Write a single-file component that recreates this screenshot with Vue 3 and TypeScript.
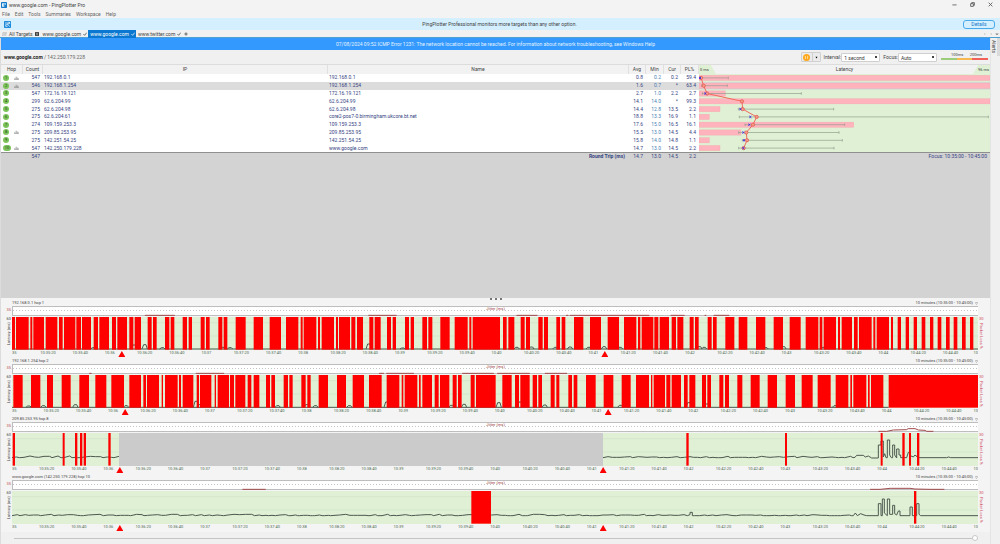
<script setup lang="ts">
import { ref } from 'vue'

interface Hop {
  n: number
  graphed: boolean
  count: number
  ip: string
  name: string
  avg: string
  min: string
  cur: string
  loss: string
  bar: number
  range: [number, number] | null
  avgX: number
  curX: number | null
}

type Span = [number, number]

interface Graph {
  id: string
  title: string
  shift: number
  markers: number[]
  loss: Span[]
  gap: Span | null
  latency: string
  jitter: string
}

const menus = ['File', 'Edit', 'Tools', 'Summaries', 'Workspace', 'Help']

const hops: Hop[] = [
  { n: 1, graphed: true, count: 547, ip: '192.168.0.1', name: '192.168.0.1', avg: '0.8', min: '0.2', cur: '0.2', loss: '59.4', bar: 873, range: [4, 88], avgX: 6, curX: 3 },
  { n: 2, graphed: true, count: 546, ip: '192.168.1.254', name: '192.168.1.254', avg: '1.6', min: '0.7', cur: '*', loss: '63.4', bar: 873, range: [8, 85], avgX: 14, curX: null },
  { n: 3, graphed: false, count: 547, ip: '172.16.19.121', name: '172.16.19.121', avg: '2.7', min: '1.0', cur: '2.2', loss: '2.7', bar: 79, range: [10, 307], avgX: 24, curX: 19 },
  { n: 4, graphed: false, count: 299, ip: '62.6.204.99', name: '62.6.204.99', avg: '14.1', min: '14.0', cur: '*', loss: '99.3', bar: 873, range: null, avgX: 129, curX: null },
  { n: 5, graphed: false, count: 275, ip: '62.6.204.98', name: '62.6.204.98', avg: '14.4', min: '12.8', cur: '13.5', loss: '2.2', bar: 63, range: [118, 404], avgX: 131, curX: 124 },
  { n: 6, graphed: false, count: 275, ip: '62.6.204.61', name: 'core2-pos7-0.birmingham.ukcore.bt.net', avg: '18.8', min: '13.3', cur: '16.9', loss: '1.1', bar: 31, range: [121, 868], avgX: 173, curX: 154 },
  { n: 7, graphed: false, count: 274, ip: '109.159.253.3', name: '109.159.253.3', avg: '17.6', min: '15.0', cur: '16.5', loss: '16.1', bar: 464, range: [138, 437], avgX: 162, curX: 151 },
  { n: 8, graphed: true, count: 275, ip: '209.85.253.95', name: '209.85.253.95', avg: '15.5', min: '13.0', cur: '14.5', loss: '4.4', bar: 126, range: [119, 420], avgX: 142, curX: 133 },
  { n: 9, graphed: false, count: 275, ip: '142.251.54.25', name: '142.251.54.25', avg: '15.8', min: '14.0', cur: '14.8', loss: '1.1', bar: 31, range: [130, 430], avgX: 144, curX: 135 },
  { n: 10, graphed: true, count: 547, ip: '142.250.179.228', name: 'www.google.com', avg: '14.7', min: '13.0', cur: '14.5', loss: '2.2', bar: 63, range: [119, 405], avgX: 134, curX: 133 },
]

const rowY = (i: number) => i * 24 + 12
const avgLine = hops.map((h, i) => `${h.avgX},${rowY(i)}`).join(' ')

const X0 = 36
const X1 = 2934

/* Small repeatable ripple for the latency traces */
function ripple(from: number, to: number, base: number, size: number, seed: number): string {
  let s = seed
  let d = `M${from} ${base}`
  let x = from
  while (x < to) {
    s = (s * 1103515245 + 12345) % 2147483648
    const r = s / 2147483648
    x = Math.min(to, x + 6 + Math.round(r * 12))
    d += ` L${x} ${base - Math.round(r * r * size)}`
  }
  return d
}

function bumps(list: Span[], base: number): string {
  return list.map(([x, h]) => `M${x - 8} ${base} L${x - 3} ${base - h} H${x + 4} L${x + 8} ${base}`).join(' ')
}

const loss1: Span[] = [
  [36, 45], [48, 86], [91, 97], [100, 132], [137, 172], [177, 188], [192, 226], [229, 243], [246, 273], [281, 294],
  [298, 327], [336, 348], [352, 381], [388, 400], [404, 423], [443, 455], [459, 470], [495, 508], [512, 523], [548, 561],
  [566, 576], [602, 614], [618, 629], [655, 667], [671, 682], [707, 737], [761, 789], [809, 843], [858, 895], [902, 908],
  [911, 949], [954, 960], [965, 1002], [1008, 1014], [1017, 1050], [1054, 1066], [1071, 1089], [1108, 1120], [1124, 1142],
  [1161, 1173], [1178, 1188], [1215, 1227], [1232, 1242], [1267, 1281], [1285, 1297], [1321, 1349], [1364, 1403],
  [1408, 1414], [1418, 1500], [1509, 1520], [1525, 1543], [1562, 1574], [1578, 1590], [1615, 1628], [1632, 1644],
  [1669, 1680], [1685, 1696], [1722, 1750], [1770, 1803], [1823, 1857], [1872, 1909], [1914, 1921], [1925, 1960],
  [1963, 1975], [1979, 2007], [2015, 2028], [2032, 2050], [2069, 2081], [2085, 2096], [2123, 2135], [2139, 2150],
  [2176, 2203], [2216, 2242], [2268, 2296], [2321, 2349], [2369, 2402], [2417, 2455], [2459, 2467], [2471, 2508],
  [2514, 2520], [2525, 2556], [2562, 2573], [2577, 2615], [2620, 2626], [2630, 2667], [2673, 2679], [2693, 2703],
  [2717, 2727], [2741, 2751], [2765, 2776], [2790, 2800], [2813, 2824], [2838, 2849], [2861, 2872], [2886, 2897], [2910, 2920],
]

const loss2: Span[] = [
  [40, 68], [93, 121], [141, 159], [185, 212], [238, 267], [286, 319], [334, 372], [388, 423], [430, 438], [441, 477],
  [485, 489], [495, 533], [537, 543], [548, 580], [590, 597], [600, 634], [644, 648], [653, 687], [690, 702], [706, 736],
  [743, 754], [761, 778], [798, 810], [814, 825], [851, 864], [868, 878], [904, 917], [922, 932], [956, 984], [1011, 1038],
  [1058, 1092], [1107, 1145], [1160, 1198], [1205, 1210], [1214, 1252], [1257, 1262], [1267, 1296], [1304, 1316],
  [1320, 1348], [1358, 1370], [1374, 1385], [1412, 1424], [1428, 1487], [1507, 1535], [1545, 1557], [1561, 1589],
  [1598, 1611], [1615, 1626], [1652, 1664], [1669, 1678], [1705, 1716], [1721, 1732], [1758, 1787], [1811, 1840],
  [1865, 1892], [1908, 1947], [1953, 1957], [1961, 1995], [1999, 2011], [2015, 2043], [2052, 2063], [2068, 2086],
  [2106, 2118], [2122, 2133], [2158, 2170], [2175, 2187], [2212, 2227], [2252, 2279], [2303, 2331], [2357, 2385],
  [2405, 2438], [2453, 2492], [2507, 2545], [2551, 2556], [2560, 2599], [2604, 2609], [2613, 2650], [2666, 2934],
]

const flat = (segs: Span[]) => segs.map(([a, b]) => `M${a} 25 H${b}`).join(' ')

const graphs: Graph[] = [
  {
    id: 'hop1',
    title: '192.168.0.1 hop 1',
    shift: -12,
    markers: [364, 1813],
    loss: loss1,
    gap: null,
    latency: 'M36 96 H2934 ' + bumps([[280, 4], [402, 12], [434, 13], [487, 4], [668, 5], [690, 4], [1106, 15], [1208, 3], [1550, 5], [1594, 6], [1666, 5], [1710, 6], [1766, 5], [1812, 7], [1860, 5], [2098, 7], [2112, 5], [2297, 4], [2350, 7], [2468, 5]], 96),
    jitter: flat([[432, 522], [1103, 1188], [1548, 1611], [1697, 1704], [1708, 1947], [2011, 2053], [2113, 2118], [2140, 2187]]),
  },
  {
    id: 'hop2',
    title: '192.168.1.254 hop 2',
    shift: -2,
    markers: [374, 1823],
    loss: loss2,
    gap: null,
    latency: 'M36 97 H2666 ' + bumps([[86, 4], [130, 5], [226, 8], [378, 5], [588, 18], [600, 8], [833, 5], [920, 8], [946, 5], [1048, 5], [1160, 16], [1354, 6], [1392, 9], [1496, 14], [1560, 16], [1634, 7], [1861, 6], [2066, 14], [2120, 10], [2505, 5]], 97),
    jitter: flat([[265, 272], [585, 670], [1135, 1150], [1157, 1240], [1385, 1480], [1490, 1588], [1633, 1700]]),
  },
  {
    id: 'hop8',
    title: '209.85.253.95 hop 8',
    shift: -16,
    markers: [358, 1808],
    loss: [[38, 45], [188, 194], [225, 232], [240, 247], [251, 258], [325, 332], [2059, 2066], [2355, 2361], [2642, 2648], [2707, 2714], [2727, 2733], [2751, 2758]],
    gap: [357, 1809],
    latency:
      ripple(36, 357, 74, 5, 7) + ' ' + ripple(1809, 2565, 74, 4, 21) +
      ' L2570 67 H2590 L2596 72 L2605 69 L2615 75 H2635 V36 H2643 V24 H2650 V72 L2654 62 L2658 74 H2662 V21 H2669 V66 L2674 74 H2678 V36 H2684 V66 L2690 75 V48 H2697 V66 H2702 V74 H2720 L2725 58 H2731 V68 L2740 72 L2745 66 L2752 72 V66 L2758 74 H2840 L2846 72 L2852 74 H2934',
    jitter: 'M2635 25 H2660 L2680 21 L2720 20 L2724 17 H2745 L2755 21 L2775 22 L2780 25 H2800',
  },
  {
    id: 'hop10',
    title: 'www.google.com (142.250.179.228) hop 10',
    shift: -16,
    markers: [358, 1808],
    loss: [[1414, 1473], [2742, 2749]],
    gap: null,
    latency:
      ripple(36, 2070, 74, 4, 99) + ' V64 H2077 V74 ' + ripple(2077, 2560, 74, 3, 45).replace('M', 'L') +
      ' L2566 66 L2572 74 L2582 68 L2592 72 L2600 74 H2635 V38 H2643 V74 H2647 V24 H2653 V66 L2662 74 V24 H2669 V70 H2678 V43 H2684 V68 L2690 72 L2695 60 H2700 V74 H2730 V48 H2737 V74 H2750 V38 H2757 V70 L2762 74 H2934',
    jitter: 'M725 25 H795 M2610 25 H2640 L2670 22 H2730 L2745 24 L2790 25 H2833',
  },
]

const tickTexts: string[] = []
for (let m = 35; m < 45; m++) {
  tickTexts.push(m === 35 ? '35' : `10:${m}`, `10:${m}:20`, `10:${m}:40`)
}

const pct = (x: number) => `${((x - X0) / (X1 - X0)) * 100}%`
const tickX = (i: number, shift: number) => (i === 0 ? '0%' : pct(X0 + shift + i * 96.7))

const interval = ref('1 second')
const focus = ref('Auto')
const position = ref(100)
</script>

<template>
  <div class="window">
    <header class="titlebar">
      <svg class="app-icon" viewBox="0 0 18 18" aria-hidden="true">
        <rect width="18" height="18" rx="2" fill="#1579c9" />
        <path d="M3 4h7v10H3z" fill="#fff" />
        <path d="M10 3h5v6h-5z" fill="#8ed0f5" />
        <path d="M5 9h8" stroke="#1579c9" stroke-width="2" />
      </svg>
      <span class="caption">www.google.com - PingPlotter Pro</span>
      <button class="win" aria-label="Minimize"><svg viewBox="0 0 12 12"><path d="M1 7h10" /></svg></button>
      <button class="win" aria-label="Restore"><svg viewBox="0 0 12 12"><path d="M1.500 4h6.500v6.500h-6.500zM4 4V1.500h6.500V8H8" /></svg></button>
      <button class="win" aria-label="Close"><svg viewBox="0 0 12 12"><path d="M1.500 1.500l9 9M10.500 1.500l-9 9" /></svg></button>
    </header>

    <nav class="menubar">
      <button v-for="m in menus" :key="m">{{ m }}</button>
    </nav>

    <section class="promo">
      <svg class="promo-icon" viewBox="0 0 21 21" aria-hidden="true">
        <rect width="21" height="21" rx="2" fill="#1c8ad8" />
        <path d="M3 6h9v5H5v5h6M12 4h5v5M17 4l-4 6M13 12l4 5" fill="none" stroke="#fff" stroke-width="2" />
      </svg>
      <span class="promo-text">PingPlotter Professional monitors more targets than any other option.</span>
      <button class="details">Details</button>
    </section>

    <nav class="tabs">
      <button class="tab all">
        <svg viewBox="0 0 15 12"><path d="M3 1h11l-3 10H1zM4 4h8M3 7h8" fill="none" stroke="#aaa" stroke-width="1.500" /></svg>
        All Targets
        <svg class="mark" viewBox="0 0 12 12"><path d="M0 1h12v10H0z" fill="#444" /><path d="M4 4l4 4M8 4l-4 4" stroke="#fff" stroke-width="1.500" /></svg>
      </button>
      <button class="tab">www.google.com <svg class="mark" viewBox="0 0 12 12"><path d="M1 6l4 4 6-8" /></svg></button>
      <button class="tab active">www.google.com <svg class="mark" viewBox="0 0 12 12"><path d="M1 6l4 4 6-8" /></svg></button>
      <button class="tab">www.twitter.com <svg class="mark" viewBox="0 0 12 12"><path d="M1 6l4 4 6-8" /></svg></button>
      <button class="tab add" aria-label="New tab"><svg class="mark" viewBox="0 0 12 12"><path d="M6 1v10M1 6h10" /></svg></button>
      <span class="tab-nav">
        <button aria-label="Previous tab"><svg viewBox="0 0 12 12"><path d="M7 3L4 6l3 3" /></svg></button>
        <button aria-label="Next tab"><svg viewBox="0 0 12 12"><path d="M5 3l3 3-3 3" /></svg></button>
        <button aria-label="Tab list"><svg viewBox="0 0 12 12"><path d="M2 5h8L6 9z" fill="#777" /></svg></button>
      </span>
    </nav>

    <div class="body">
      <main class="main">
        <div class="alert">07/08/2024 09:52 ICMP Error 1231: The network location cannot be reached. For information about network troubleshooting, see Windows Help</div>

        <div class="target">
          <p class="target-name"><b>www.google.com</b> / 142.250.179.228</p>
          <button class="pause" aria-label="Pause">
            <span class="pause-face"><svg viewBox="0 0 20 20"><circle cx="10" cy="10" r="10" fill="#ffa81f" /><path d="M7 6v8M13 6v8" stroke="#ffd88c" stroke-width="3" /></svg></span>
            <span class="pause-more"><svg viewBox="0 0 12 12"><path d="M2 3h8L6 10z" /></svg></span>
          </button>
          <label class="field">Interval:
            <select v-model="interval"><option>1 second</option><option>2.5 seconds</option></select>
          </label>
          <label class="field">Focus:
            <select v-model="focus"><option>Auto</option><option>10 minutes</option></select>
          </label>
          <div class="scale">
            <div class="scale-text"><span>100ms</span><span>200ms</span></div>
            <div class="scale-bar"><i class="good"></i><i class="warn"></i><i class="bad"></i></div>
          </div>
        </div>

        <div class="trace">
          <table class="hops">
            <thead>
              <tr><th>Hop</th><th>Count</th><th>IP</th><th>Name</th><th>Avg</th><th>Min</th><th>Cur</th><th>PL%</th></tr>
            </thead>
            <tbody>
              <tr v-for="h in hops" :key="h.n" :class="{ selected: h.n === 2 }">
                <td class="hop">
                  <span class="badge" :class="{ wide: h.n === 10 }">{{ h.n }}</span>
                  <svg v-if="h.graphed" viewBox="0 0 14 12"><path d="M2 10V6M6 10V2M9 10V4M12 10V6M0 11h14" /></svg>
                </td>
                <td class="num">{{ h.count }}</td>
                <td class="addr">{{ h.ip }}</td>
                <td class="addr">{{ h.name }}</td>
                <td class="num">{{ h.avg }}</td>
                <td class="num min">{{ h.min }}</td>
                <td class="num">{{ h.cur }}</td>
                <td class="num">{{ h.loss }}</td>
              </tr>
            </tbody>
            <tfoot>
              <tr>
                <td></td><td class="num">547</td><td></td><td class="round">Round Trip (ms)</td>
                <td class="num">14.7</td><td class="num">13.0</td><td class="num">14.5</td><td class="num">2.2</td>
              </tr>
            </tfoot>
          </table>
          <div class="latency">
            <div class="latency-head"><span class="lo">0 ms</span><span>Latency</span><span class="hi">96 ms</span></div>
            <svg class="latency-plot" viewBox="0 0 873 240" preserveAspectRatio="none" role="img" aria-label="Latency by hop">
              <rect width="873" height="240" fill="#dff0d4" />
              <rect y="24" width="873" height="24" fill="#d6d6d6" />
              <rect v-for="(h, i) in hops" :key="'b' + h.n" x="0" :y="rowY(i) - 8" :width="h.bar" height="16" fill="#ffb3bd" stroke="#f5a0aa" />
              <template v-for="(h, i) in hops" :key="'w' + h.n">
                <path v-if="h.range" :d="`M${h.range[0]} ${rowY(i)}H${h.range[1]}M${h.range[0]} ${rowY(i) - 4}v8M${h.range[1]} ${rowY(i) - 4}v8`" stroke="#8d9a8b" stroke-width="2" fill="none" />
              </template>
              <polyline :points="avgLine" fill="none" stroke="#f06a5a" stroke-width="3" />
              <template v-for="(h, i) in hops" :key="'p' + h.n">
                <circle :cx="h.avgX" :cy="rowY(i)" r="5" fill="#f59a8e" stroke="#e0503f" stroke-width="2" />
                <path v-if="h.curX !== null" :d="`M${h.curX - 3} ${rowY(i) - 3}l6 6m0 -6l-6 6`" stroke="#3a2ee6" stroke-width="3" />
              </template>
            </svg>
            <div class="latency-foot">Focus: 10:35:00 - 10:45:00</div>
          </div>
        </div>

        <div class="empty"></div>
        <div class="splitter"><i></i><i></i><i></i></div>

        <div class="graphs">
          <section v-for="g in graphs" :key="g.id" class="graph">
            <div class="graph-title">
              <span>{{ g.title }}</span>
              <span>10 minutes (10:35:00 - 10:45:00)<svg viewBox="0 0 12 12"><path d="M1 2h10M2 5l4 5 4-5" /></svg></span>
            </div>
            <span class="jitter-max">35</span>
            <div class="jitter">
              <span class="jitter-label">Jitter (ms)</span>
              <svg viewBox="36 0 2898 27" preserveAspectRatio="none"><path :d="g.jitter" fill="none" stroke="#a04a4a" stroke-width="3" /></svg>
            </div>
            <div class="axis left"><span>60</span><span class="turned">Latency (ms)</span></div>
            <svg class="plot" viewBox="36 0 2898 99" preserveAspectRatio="none" role="img" :aria-label="g.title">
              <rect x="36" width="2898" height="99" fill="#dff0d4" />
              <path d="M36 17H2934M36 57H2934" stroke="#d0e2c8" stroke-width="2" />
              <rect v-if="g.gap" :x="g.gap[0]" :width="g.gap[1] - g.gap[0]" height="99" fill="#cbcbcb" />
              <path :d="g.latency" fill="none" stroke="#4c5850" stroke-width="3" />
              <rect v-for="s in g.loss" :key="s[0]" :x="s[0]" :width="s[1] - s[0]" height="98" fill="#ff0000" />
            </svg>
            <div class="axis right"><span>30</span><span class="turned">Packet Loss %</span></div>
            <div class="ticks">
              <span v-for="(t, i) in tickTexts" :key="t" :style="{ left: tickX(i, g.shift) }">{{ t }}</span>
              <span class="last">10</span>
              <i v-for="m in g.markers" :key="m" :style="{ left: pct(m) }"></i>
            </div>
          </section>
        </div>

        <div class="timeline"><input v-model="position" type="range" min="0" max="100" aria-label="Timeline position" /></div>
      </main>
      <aside class="side"><button>Alerts</button></aside>
    </div>
  </div>
</template>

<style>
body {
  margin: 0;
  background: #f0f0f0;
}
</style>

<style scoped>
.window {
  display: flex;
  flex-direction: column;
  min-height: 100vh;
  font: 5px/8px Roboto, "Open Sans", "Liberation Sans", sans-serif;
  color: #444;
  background: #f0f0f0;
}
.window * {
  box-sizing: border-box;
}
button,
select {
  font: inherit;
  color: inherit;
  background: none;
  border: 0;
  padding: 0;
  margin: 0;
}
svg {
  display: block;
}
.titlebar {
  display: flex;
  align-items: center;
  height: 9px;
  gap: 3px;
  padding: 0 2px 0 1px;
  background: #f3f3f3;
}
.app-icon {
  width: 6px;
  height: 6px;
}
.caption {
  flex: 1;
  margin-left: -1px;
}
.win {
  width: 15px;
}
.win svg {
  width: 5px;
  height: 5px;
  margin: auto;
  fill: none;
  stroke: #555;
  stroke-width: 2;
}
.menubar {
  display: flex;
  gap: 5px;
  height: 9px;
  padding: 0 2px;
  align-items: center;
  background: #f3f3f3;
  color: #666;
}
.promo {
  display: flex;
  align-items: center;
  height: 12px;
  padding: 0 5px 0 4px;
  background: #d4efff;
}
.promo-icon {
  width: 7px;
  height: 7px;
}
.promo-text {
  flex: 1;
  text-align: center;
  padding-left: 25px;
}
.details {
  width: 32px;
  height: 9px;
  line-height: 7px;
  border: 1px solid #4aa9e8;
  border-radius: 3px;
  color: #1476c8;
}
.tabs {
  display: flex;
  height: 8px;
  border-bottom: 1px solid #4f9fd2;
  background: #f1f1f1;
}
.tab {
  display: flex;
  align-items: center;
  gap: 2px;
  padding: 0 1px 0 2px;
  height: 8px;
  line-height: 8px;
}
.tab.all {
  padding-right: 2px;
}
.tab svg {
  width: 5px;
  height: 4px;
}
.tab .mark {
  width: 4px;
  fill: none;
  stroke: #333;
  stroke-width: 2;
}
.tab.active {
  background: #0a78d0;
  color: #fff;
}
.tab.active .mark {
  stroke: #fff;
}
.tab-nav {
  display: flex;
  margin-left: auto;
  gap: 2px;
  padding-right: 1px;
}
.tab-nav svg {
  width: 4px;
  height: 4px;
  fill: none;
  stroke: #777;
  stroke-width: 1;
}
.body {
  flex: 1;
  display: flex;
}
.main {
  flex: 1;
  min-width: 0;
  display: flex;
  flex-direction: column;
  border-left: 1px solid #dcdcdc;
}
.side {
  width: 10px;
  background: #f0f0f0;
  border-left: 1px solid #e4e4e4;
}
.side button {
  writing-mode: vertical-rl;
  width: 9px;
  height: 18px;
  border-right: 3px solid #dadada;
  line-height: 6px;
}
.alert {
  height: 12px;
  line-height: 12px;
  text-align: center;
  background: #3399ff;
  color: #e4f2ff;
}
.target {
  display: flex;
  align-items: center;
  height: 15px;
  padding: 0 2px 0 3px;
  gap: 3px;
  background: #f0f0f0;
  border-bottom: 1px solid #dcdcdc;
}
.target-name {
  flex: 1;
  margin: 0;
  color: #666;
}
.target-name b {
  color: #222;
}
.pause {
  display: flex;
  width: 20px;
  height: 10px;
  border: 1px solid #d0d0d0;
  border-radius: 1px;
  background: #ebebeb;
}
.pause-face,
.pause-more {
  display: flex;
  height: 8px;
  align-items: center;
  justify-content: center;
}
.pause-face {
  flex: 1;
  border-right: 1px solid #d0d0d0;
}
.pause-face svg {
  width: 7px;
  height: 7px;
}
.pause-more {
  width: 7px;
}
.pause-more svg {
  width: 3px;
  height: 3px;
}
.field {
  display: flex;
  align-items: center;
}
.field select {
  appearance: none;
  width: 39px;
  height: 9px;
  padding: 0 2px;
  border: 1px solid #cfcfcf;
  border-radius: 1px;
  color: #333;
  background: #fff linear-gradient(#444, #444) right 2px center / 2px 2px no-repeat;
}
.scale {
  width: 47px;
  margin-left: 1px;
  padding-bottom: 2px;
}
.scale-text {
  display: flex;
  justify-content: space-between;
  padding: 0 6px 0 10px;
  font-size: 4px;
  line-height: 6px;
}
.scale-bar {
  display: flex;
  height: 2px;
}
.scale-bar i {
  flex: 1;
}
.good {
  background: #9ccc7c;
}
.warn {
  background: #f5b950;
}
.bad {
  background: #f2605a;
}
.trace {
  display: grid;
  grid-template-columns: 698fr 291fr;
}
.hops {
  display: block;
}
.hops thead,
.hops tfoot {
  display: block;
}
.hops tbody {
  display: grid;
  grid-template-rows: repeat(10, minmax(0, 1fr));
  height: 78px;
  line-height: 7px;
  background: #fff;
}
.hops tr {
  display: grid;
  grid-template-columns: 22px 20px 285fr 301fr 17px 18px 17px 18px;
  align-items: center;
}
.hops th,
.hops td {
  padding: 0;
  min-width: 0;
  white-space: nowrap;
}
.hops th {
  height: 9px;
  line-height: 9px;
  font-weight: 400;
  border-right: 1px solid #e0e0e0;
  background: #f2f2f2;
}
.hops tbody,
.hops tfoot {
  color: #35427f;
}
.hops .selected {
  background: #dcdcdc;
}
.hop {
  display: flex;
  align-items: center;
  gap: 5px;
  padding-left: 2px !important;
}
.hop svg {
  width: 5px;
  height: 4px;
  stroke: #888;
  stroke-width: 2;
}
.badge {
  width: 6px;
  height: 6px;
  border-radius: 3px;
  background: #7cc35b;
  color: #244a1a;
  font-size: 4px;
  line-height: 6px;
  text-align: center;
}
.badge.wide {
  width: 8px;
  margin-right: -2px;
}
.num {
  text-align: right;
  padding-right: 3px !important;
}
.min {
  color: #4a7fb5;
}
.addr {
  padding-left: 1px !important;
}
.hops tfoot tr,
.latency-foot {
  height: 9px;
  line-height: 7px;
  border-top: 1px solid #8f8f8f;
  background: #d3d3d3;
}
.hops tfoot tr {
  align-items: start;
}
.round {
  text-align: right;
  font-weight: 700;
  padding-right: 4px !important;
}
.latency {
  display: flex;
  flex-direction: column;
}
.latency-head {
  display: flex;
  justify-content: space-between;
  height: 9px;
  line-height: 9px;
  background: #f2f2f2;
}
.lo,
.hi {
  width: 17px;
  font-size: 4px;
  background: #dff0d4;
}
.lo {
  padding-left: 1px;
  clip-path: polygon(0 0, 70% 0, 100% 100%, 0 100%);
}
.hi {
  text-align: right;
  padding-right: 1px;
  clip-path: polygon(30% 0, 100% 0, 100% 100%, 0 100%);
}
.latency-plot {
  width: 100%;
  height: 78px;
}
.latency-foot {
  text-align: right;
  padding-right: 3px;
  color: #35427f;
}
.empty {
  flex: 1;
  background: #d3d3d3;
}
.splitter {
  display: flex;
  justify-content: center;
  align-items: flex-end;
  gap: 3px;
  height: 2px;
  background: #f4f4f4;
}
.splitter i {
  width: 2px;
  height: 2px;
  background: #777;
}
.graphs {
  background: #f4f4f4;
}
.graph {
  display: grid;
  grid-template: 6px 10px 1px 33px 8px / 11px 1fr 12px;
}
.graph-title {
  grid-area: 1 / 2 / 2 / 3;
  display: flex;
  justify-content: space-between;
  font-size: 4px;
  line-height: 6px;
}
.graph-title span {
  display: flex;
  align-items: center;
  gap: 2px;
}
.graph-title svg {
  width: 3px;
  height: 3px;
  fill: none;
  stroke: #888;
  stroke-width: 2;
}
.jitter-max {
  grid-area: 2 / 1 / 3 / 2;
  text-align: right;
  padding-right: 1px;
  line-height: 8px;
  font-size: 4px;
  color: #c0504d;
}
.jitter {
  grid-area: 2 / 2 / 3 / 3;
  position: relative;
  border: 1px solid #bdbdbd;
  border-right: 0;
  background: repeating-linear-gradient(90deg, #c4c4c4 0 1px, transparent 1px 3px) 0 3px / 100% 1px no-repeat #fff;
}
.jitter svg {
  position: absolute;
  left: 0;
  top: 0;
  width: 100%;
  height: 9px;
}
.jitter-label {
  position: absolute;
  left: 50%;
  top: -1px;
  transform: translateX(-50%);
  font-size: 4px;
  line-height: 5px;
  color: #a33c3c;
}
.axis {
  display: flex;
  flex-direction: column;
  line-height: 4px;
  font-size: 4px;
}
.axis.left {
  grid-area: 4 / 1 / 5 / 2;
  align-items: flex-end;
  gap: 1px;
  padding-right: 1px;
}
.axis.right {
  grid-area: 4 / 3 / 5 / 4;
  align-items: flex-start;
  gap: 2px;
  color: #cf4f5f;
  padding-left: 1px;
}
.turned {
  writing-mode: vertical-rl;
}
.left .turned {
  transform: rotate(180deg);
  line-height: 5px;
}
.plot {
  grid-area: 4 / 2 / 5 / 3;
  width: 100%;
  height: 33px;
}
.ticks {
  grid-area: 5 / 2 / 6 / 3;
  position: relative;
  overflow: hidden;
  font-size: 4px;
  line-height: 5px;
  color: #4b6b50;
}
.ticks span {
  position: absolute;
  top: 0;
}
.ticks .last {
  right: 0;
}
.ticks i {
  position: absolute;
  top: 1px;
  width: 7px;
  height: 6px;
  margin-left: -3px;
  background: #f00;
  clip-path: polygon(50% 0, 100% 100%, 0 100%);
}
.timeline {
  height: 12px;
  padding: 3px 12px 0 13px;
}
.timeline input {
  appearance: none;
  display: block;
  width: 100%;
  height: 6px;
  margin: 0;
  background: linear-gradient(#c4c4c4, #c4c4c4) center / 100% 1px no-repeat;
}
.timeline input::-webkit-slider-thumb {
  appearance: none;
  width: 6px;
  height: 6px;
  border: 1px solid #c8c8c8;
  border-radius: 3px;
  background: #fff;
}
</style>
